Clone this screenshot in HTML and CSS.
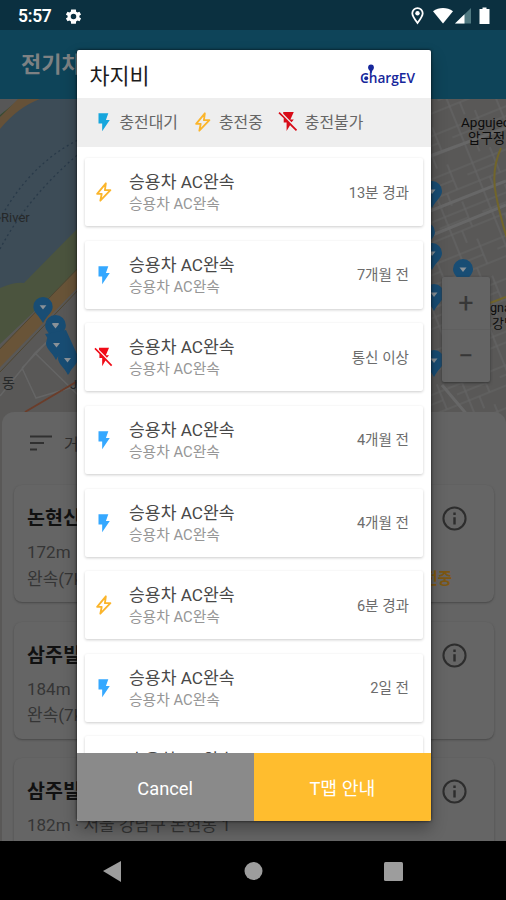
FILE: index.html
```
<!DOCTYPE html>
<html lang="ko">
<head>
<meta charset="utf-8">
<title>차지비</title>
<link rel="stylesheet" href="styles.css">
</head>
<body>
<svg class="defs" width="0" height="0">
  <symbol id="flash" viewBox="0 0 24 24"><path d="M6 2.500v11h4V22l8.300-12.300h-4.200l2.600-7.200z"/></symbol>
  <symbol id="busy" viewBox="0 0 24 24"><path fill="none" stroke="currentColor" stroke-width="2" stroke-linejoin="round" d="M14 2.500 4.500 14h5L8 21.500 19 10h-6z"/></symbol>
  <symbol id="off" viewBox="0 0 24 24"><path d="M2.800 2 1.500 3.300 7 8.700V13h3v9l3.600-6.100L19.700 22l1.300-1.300zM17.500 10H14l3.500-8H6.500v2l8.700 8.800z"/></symbol>
  <symbol id="info" viewBox="0 0 24 24"><path d="M11 7h2v2h-2zm0 4h2v6h-2zm1-9a10 10 0 1 0 0 20 10 10 0 0 0 0-20zm0 18.300a8.300 8.300 0 1 1 0-16.600 8.300 8.300 0 0 1 0 16.600z"/></symbol>
  <symbol id="pin" viewBox="0 0 20 28" overflow="visible"><path fill="#184d74" d="M10 0A10 10 0 0 0 0 10c0 6 6 9 10 17 4-8 10-11 10-17A10 10 0 0 0 10 0z"/><path fill="#8a9298" d="M6.500 8.500h7L10 13z"/></symbol>
</svg>
<div class="screen">
  <header class="status">
    <span class="clock">5:57</span>
    <svg class="gear" viewBox="0 0 24 24"><path fill="#fff" fill-rule="evenodd" d="M19.400 13a7.500 7.500 0 0 0 0-2l2.100-1.600-2-3.500-2.500 1a7.300 7.300 0 0 0-1.700-1L15 3H9l-.4 2.900a7.300 7.300 0 0 0-1.700 1l-2.500-1-2 3.500L4.600 11a7.500 7.500 0 0 0 0 2l-2.200 1.600 2 3.500 2.500-1a7.300 7.300 0 0 0 1.700 1L9 21h6l.4-2.900a7.300 7.300 0 0 0 1.700-1l2.500 1 2-3.500zM12 15.500a3.500 3.500 0 1 1 0-7 3.500 3.500 0 0 1 0 7z"/></svg>
    <svg class="tray" viewBox="0 0 82 20">
      <path fill="none" stroke="#fff" stroke-width="1.800" d="M6.500 17C3 12.500 1.300 10 1.300 7.300a5.200 5.200 0 0 1 10.400 0C11.700 10 10 12.500 6.500 17z"/><circle cx="6.500" cy="7.300" r="2.200" fill="#fff"/>
      <path fill="#fff" d="M22 5.200c6-4.300 14-4.300 20 0L32 17.500z"/>
      <path fill="#4f7880" d="M60 2v15.500H44z"/><path fill="#fff" d="M53.500 8.300v9.200H44z"/>
      <path fill="#fff" d="M71.500 1.500h4V3h3v15h-10V3h3z"/>
    </svg>
  </header>
  <div class="appbar">전기차</div>
  <div class="map">
    <svg class="terrain" viewBox="0 99 506 331">
      <defs><pattern id="streets" width="46" height="40" patternUnits="userSpaceOnUse" patternTransform="rotate(-22)"><path fill="none" stroke="#656565" stroke-width="1.200" d="M0 8H46M0 27H46M9 0V40M31 0V27M20 27V40M0 17H31"/></pattern></defs>
      <path fill="#595857" d="M0 99H506V430H0z"/>
      <path fill="url(#streets)" d="M425 99H506V430H425z"/>
      <path fill="none" stroke="#676767" stroke-width="3" d="M425 213 506 181M425 238 506 205M430 156 506 128M442 385 480 430"/>
      <path fill="#3d4c57" d="M0 99H80V232L25 283 0 290z"/>
      <path fill="#575757" d="M0 99H20L0 116z"/>
      <path fill="none" stroke="#374b31" stroke-width="1.500" d="M0 116 21 99"/>
      <path fill="#655138" d="M18 99H40Q18 107 0 129V117z"/>
      <path fill="#4b543e" d="M0 288Q14 282 24 283L80 226V268L0 344z"/>
      <path fill="none" stroke="#695438" stroke-width="13" d="M-5 363 82 274"/>
      <path fill="none" stroke="#504630" d="M-3 352 80 266M0 372 80 288"/>
      <path fill="none" stroke="#293a49" stroke-width="1.300" stroke-dasharray="2 3" d="M0 219Q31 162 82 138M0 249Q28 196 82 151"/>
      <path fill="none" stroke="#656565" stroke-width="1.500" d="M0 396 35 353 52 337M22 368 36 398 80 385M35 353 78 395M22 368 48 341"/>
      <path fill="none" stroke="#6b3d2a" stroke-width="2" d="M25 412 76 382"/>
      <path fill="none" stroke="#71652b" stroke-width="2" d="M501 148Q491 170 496 195T507 238M490 303 506 297"/>
      <g class="pins"><use href="#pin" x="45" y="315" width="21" height="29"/><use href="#pin" x="33" y="297" width="20" height="27"/><use href="#pin" x="46" y="333" width="20" height="28"/><use href="#pin" x="58" y="348" width="20" height="28"/><path fill="#184d74" d="M45 334 66 330 76 352 69 374z"/><path fill="#8a9298" d="M52 323h7l-3.500 4.500zM53 343h7l-3.500 4.500zM64 358h7l-3.500 4.500z"/>
      <use href="#pin" x="422" y="181" width="20" height="28"/><use href="#pin" x="416" y="223" width="20" height="25"/><use href="#pin" x="422" y="243" width="20" height="28"/><use href="#pin" x="424" y="284" width="20" height="28"/><use href="#pin" x="424" y="350" width="20" height="28"/><use href="#pin" x="453" y="259" width="20" height="28"/></g>
      <g class="labels"><text x="1" y="222" font-size="13">River</text><text x="2" y="388" font-size="14">동</text><text x="70" y="389" font-size="13">J</text><g class="dark"><text x="461" y="127" font-size="13.500">Apgujeo</text><text x="468" y="143" font-size="13.500">압구정</text><text x="490" y="312" font-size="12.500">gna</text><text x="492" y="328" font-size="13">강남</text></g></g>
    </svg>
    <div class="zoomer"><span>+</span><span>−</span></div>
  </div>
  <main class="sheet">
    <div class="sort"><svg viewBox="0 0 22 16"><path stroke="#303030" stroke-width="2" d="M0 1.500H22M0 8H14M0 14.500H7"/></svg><span>거</span></div>
    <article class="place"><div><h2>논현신</h2><p>172m</p><p>완속(7k</p></div><svg class="info"><use href="#info"/></svg><b class="using">전중</b></article>
    <article class="place"><div><h2>삼주빌</h2><p>184m</p><p>완속(7k</p></div><svg class="info"><use href="#info"/></svg></article>
    <article class="place"><div><h2>삼주빌</h2><p>182m · 서울 강남구 논현동 1</p></div><svg class="info"><use href="#info"/></svg></article>
  </main>
  <nav class="nav">
    <svg viewBox="0 0 506 59"><path d="M103 30 121 20V41z"/><circle cx="253.500" cy="30" r="9"/><rect x="384" y="21" width="19" height="19" rx="1.500"/></svg>
  </nav>
</div>
<section class="dialog">
  <header class="head"><h1>차지비</h1>
    <svg class="logo" viewBox="0 0 58 26"><text x="1" y="19" font-size="13.500" textLength="55" lengthAdjust="spacingAndGlyphs">ChargEV</text><circle cx="12" cy="3.500" r="2.900"/><path d="M10 5h4l-1.500 4h-1z"/><circle cx="7.200" cy="14.300" r="2"/></svg>
  </header>
  <div class="legend">
    <span><svg class="ready"><use href="#flash"/></svg>충전대기</span>
    <span><svg class="charging"><use href="#busy"/></svg>충전중</span>
    <span><svg class="broken"><use href="#off"/></svg>충전불가</span>
  </div>
  <div class="list">
    <div class="card"><svg class="charging"><use href="#busy"/></svg><div class="name"><h3>승용차 AC완속</h3><p>승용차 AC완속</p></div><time>13분 경과</time></div>
    <div class="card"><svg class="idle"><use href="#flash"/></svg><div class="name"><h3>승용차 AC완속</h3><p>승용차 AC완속</p></div><time>7개월 전</time></div>
    <div class="card"><svg class="fault"><use href="#off"/></svg><div class="name"><h3>승용차 AC완속</h3><p>승용차 AC완속</p></div><time>통신 이상</time></div>
    <div class="card"><svg class="idle"><use href="#flash"/></svg><div class="name"><h3>승용차 AC완속</h3><p>승용차 AC완속</p></div><time>4개월 전</time></div>
    <div class="card"><svg class="idle"><use href="#flash"/></svg><div class="name"><h3>승용차 AC완속</h3><p>승용차 AC완속</p></div><time>4개월 전</time></div>
    <div class="card"><svg class="charging"><use href="#busy"/></svg><div class="name"><h3>승용차 AC완속</h3><p>승용차 AC완속</p></div><time>6분 경과</time></div>
    <div class="card"><svg class="idle"><use href="#flash"/></svg><div class="name"><h3>승용차 AC완속</h3><p>승용차 AC완속</p></div><time>2일 전</time></div>
    <div class="card"><div class="name last"><h3>승용차 AC완속</h3></div></div>
  </div>
  <footer class="actions"><button class="cancel">Cancel</button><button class="go">T맵 안내</button></footer>
</section>
</body>
</html>
```
FILE: styles.css
```
* { box-sizing: border-box; margin: 0; padding: 0; }
body { width: 506px; height: 900px; overflow: hidden; position: relative; background: #000; font-family: Roboto, "Noto Sans CJK KR", sans-serif; }
.defs { position: absolute; }
.screen { display: flex; flex-direction: column; height: 900px; background: #595857; }
.status { flex: 0 0 30px; display: flex; align-items: center; padding: 2px 13px 0 18px; background: #0b3040; color: #fff; }
.clock { font-size: 17.5px; font-weight: 600; line-height: 28px; width: 46px; letter-spacing: -.3px; }
.gear { width: 19px; height: 19px; }
.tray { width: 82px; height: 20px; margin-left: auto; }
.appbar { flex: 0 0 69px; min-height: 0; background: #0e4459; color: #7d8183; font-size: 22px; font-weight: 600; line-height: 69px; padding-left: 21px; white-space: nowrap; }
.map { flex: 0 0 313px; min-height: 0; position: relative; }
.terrain { display: block; width: 506px; height: 331px; font-family: Roboto, "Noto Sans CJK KR", sans-serif; }
.labels { fill: #262829; }
.labels .dark { fill: #0c0c0c; }
.zoomer { position: absolute; left: 442px; top: 178px; width: 48px; height: 105px; display: flex; flex-direction: column; background: #646464; border-radius: 2px; box-shadow: 0 1px 3px #333; color: #373737; }
.zoomer span { flex: 1; display: flex; align-items: center; justify-content: center; font-size: 27px; }
.zoomer span + span { border-top: 1px solid #5f5f5f; }
.sheet { flex: 0 0 429px; min-height: 0; position: relative; overflow: hidden; background: #646464; border-radius: 12px 12px 0 0; margin-left: 2px; padding: 0 12px; }
.sort { height: 61px; display: flex; align-items: center; gap: 12px; padding-left: 16px; font-size: 16px; color: #303030; }
.sort svg { width: 22px; height: 16px; }
.place { position: relative; height: 117px; margin-bottom: 19.5px; padding: 20px 25px 0 13px; display: flex; justify-content: space-between; border-radius: 8px; background: #656565; box-shadow: 0 1px 2px #484848; white-space: nowrap; }
.sort + .place { margin-top: 12px; }
.place h2 { font-size: 19.5px; font-weight: 600; line-height: 28px; color: #111; margin-bottom: 6px; }
.place p { font-size: 17px; line-height: 26.5px; color: #353535; }
.place .info { width: 29px; height: 29px; margin-top: -1px; fill: #2d2d2d; }
.using { position: absolute; right: 42px; top: 81px; font-size: 15.5px; line-height: 26px; color: #7d5711; }
.nav { flex: 0 0 59px; background: #000; fill: #9d9d9d; position: relative; }
.nav svg { display: block; width: 506px; height: 59px; }
.dialog { position: absolute; left: 76.5px; top: 50px; width: 354.5px; height: 771px; display: flex; flex-direction: column; background: #fff; border-radius: 2px; overflow: hidden; box-shadow: 0 8px 16px rgba(0,0,0,.3), 0 0 3px rgba(0,0,0,.8); }
.head { flex: 0 0 48px; display: flex; align-items: center; justify-content: space-between; padding: 6px 14px 0 13px; }
.head h1 { font-size: 21.8px; font-weight: 400; line-height: 32px; color: #1c1c1c; }
.logo { width: 58px; height: 26px; font-family: "Open Sans", sans-serif; font-weight: 600; fill: #17279b; }
.legend { flex: 0 0 49px; display: flex; background: #eee; padding: 0 0 2px 16px; gap: 14px; font-size: 15.9px; color: #666; }
.legend span { display: flex; align-items: center; gap: 5px; }
.legend svg, .card > svg { width: 22px; height: 22px; flex: none; }
.legend .broken { width: 23px; height: 23px; }
.ready { fill: #16a6dd; }
.idle { fill: #35a8ff; }
.charging { color: #fbb52b; }
.broken { fill: #d80c18; }
.fault { fill: #f00b17; }
.list { flex: 0 0 606px; overflow: hidden; padding: 11px 8px 0 8.5px; }
.card { height: 68px; margin-bottom: 14.65px; display: flex; align-items: center; padding: 0 14px 0 8px; border-radius: 2px; background: #fff; box-shadow: 0 1px 3px rgba(0,0,0,.2); }
.name { margin-left: 14px; }
.name.last { margin: 0 0 20px 36px; }
.name h3 { font-size: 17.2px; font-weight: 400; line-height: 24px; color: #484848; }
.name p { font-size: 14.8px; line-height: 20px; color: #969696; }
.card time { margin: -2px 0 0 auto; font-size: 14.6px; color: #6c6c6c; }
.actions { flex: 0 0 68px; display: flex; }
.actions button { flex: 1; border: 0; color: #fff; font: 400 18.3px Roboto, "Noto Sans CJK KR", sans-serif; }
.actions .cancel { background: #8a8a8a; padding-top: 2px; }
.actions .go { background: #ffbd2e; }
```
